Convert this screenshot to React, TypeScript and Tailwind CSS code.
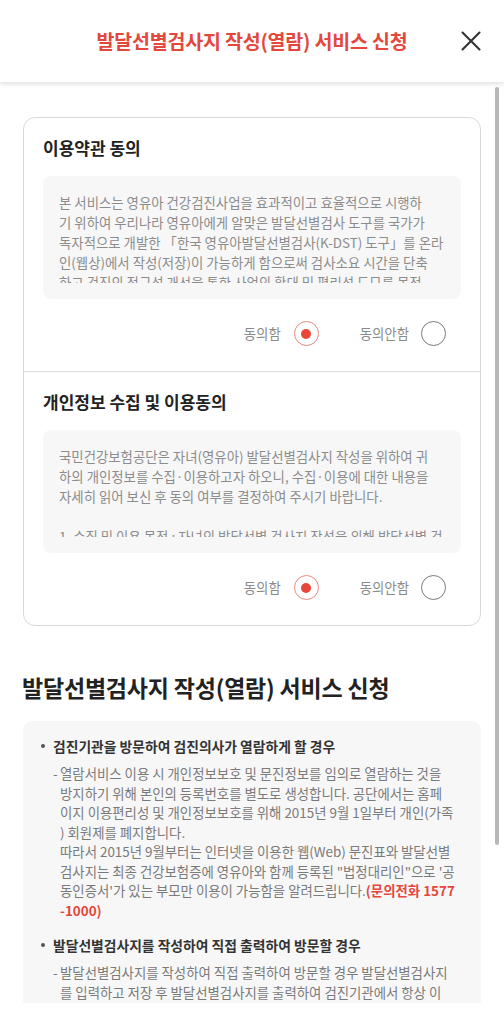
import type { ReactNode } from 'react'

const FONT = { fontFamily: '"Noto Sans CJK KR", "Noto Sans", sans-serif' }

const TERMS = [
  '본 서비스는 영유아 건강검진사업을 효과적이고 효율적으로 시행하',
  '기 위하여 우리나라 영유아에게 알맞은 발달선별검사 도구를 국가가',
  '독자적으로 개발한 「한국 영유아발달선별검사(K-DST) 도구」를 온라',
  '인(웹상)에서 작성(저장)이 가능하게 함으로써 검사소요 시간을 단축',
  '하고 검진의 접근성 개선을 통한 사업의 확대 및 편리성 도모를 목적',
]

const PRIVACY = [
  '국민건강보험공단은 자녀(영유아) 발달선별검사지 작성을 위하여 귀',
  '하의 개인정보를 수집·이용하고자 하오니, 수집·이용에 대한 내용을',
  '자세히 읽어 보신 후 동의 여부를 결정하여 주시기 바랍니다.',
  '\u00a0',
  '1. 수집 및 이용 목적 : 자녀의 발달선별 검사지 작성을 위해 발달선별 검사',
]

const Radio = ({ checked }: { checked: boolean }) =>
  checked ? (
    <span className="w-[25px] h-[25px] rounded-full border-[1.5px] border-[#e9897f] flex items-center justify-center">
      <span className="w-[10px] h-[10px] rounded-full bg-[#e8463a]" />
    </span>
  ) : (
    <span className="block w-[25px] h-[25px] rounded-full border-[1.5px] border-[#7a7a7a]" />
  )

const AgreeSection = ({ title, lines, last }: { title: string; lines: string[]; last?: boolean }) => (
  <div className={`px-[19px] pt-[17px] pb-[25px] ${last ? '' : 'border-b border-[#dcdcdc]'}`}>
    <h3 className="text-[17px] leading-[25px] font-bold text-[#222]">{title}</h3>
    <div className="mt-[16px] rounded-[8px] bg-[#f7f7f8] px-[16px] py-[16px]">
      <div className="h-[91px] overflow-hidden text-[13.4px] leading-[20px] text-[#8c8c8c]">
        {lines.map((l, i) => (
          <div key={i} className="whitespace-nowrap">{l}</div>
        ))}
      </div>
    </div>
    <div className="mt-[22px] flex items-center justify-end pr-[15px] text-[13.4px] text-[#8a8a8a]">
      <span>동의함</span>
      <span className="ml-[13px]"><Radio checked /></span>
      <span className="ml-[41px]">동의안함</span>
      <span className="ml-[12px]"><Radio checked={false} /></span>
    </div>
  </div>
)

const Bullet = ({ title, children }: { title: string; children: ReactNode }) => (
  <div>
    <div className="flex items-center text-[13.8px] leading-[22px] font-semibold text-[#333]">
      <span className="w-[4px] h-[4px] rounded-full bg-[#555] mr-[8px]" />
      {title}
    </div>
    <div className="flex pl-[12px] mt-[7px] text-[13.4px] leading-[19.5px] text-[#7a7a7a]">
      <span className="w-[7px] shrink-0">-</span>
      <div>{children}</div>
    </div>
  </div>
)

const Line = ({ children }: { children: ReactNode }) => <div className="whitespace-nowrap">{children}</div>

export default function App() {
  return (
    <div className="w-[504px] h-[1024px] bg-white overflow-hidden" style={FONT}>
      <header className="relative z-10 h-[82px] grid grid-cols-[1fr_auto_1fr] items-center bg-white shadow-[0_2px_5px_rgba(0,0,0,0.13)]">
        <div />
        <h1 className="text-[19.5px] font-bold text-[#e4473b] tracking-[-0.2px]">발달선별검사지 작성(열람) 서비스 신청</h1>
        <div className="flex justify-end pr-[22px]">
          <svg width="22" height="22" viewBox="0 0 22 22" fill="none" stroke="#333" strokeWidth="2.1" strokeLinecap="round">
            <path d="M2.5 2.5 L19.5 19.5 M19.5 2.5 L2.5 19.5" />
          </svg>
        </div>
      </header>

      <main className="relative h-[921px] overflow-hidden px-[23px] pt-[35px]">
        <div className="absolute right-[5px] top-[5px] w-[4px] h-[758px] rounded-full bg-[#b8b8b8]" />

        <section className="rounded-[12px] border border-[#d9d9d9]">
          <AgreeSection title="이용약관 동의" lines={TERMS} />
          <AgreeSection title="개인정보 수집 및 이용동의" lines={PRIVACY} last />
        </section>

        <h2 className="mt-[46px] text-[23px] leading-[30px] font-bold text-[#222] -ml-[1px] tracking-[-0.2px]">
          발달선별검사지 작성(열람) 서비스 신청
        </h2>

        <div className="mt-[19px] rounded-[10px] bg-[#f7f7f8] pl-[18px] pr-[12px] pt-[14px] pb-[40px]">
          <Bullet title="검진기관을 방문하여 검진의사가 열람하게 할 경우">
            <Line>열람서비스 이용 시 개인정보보호 및 문진정보를 임의로 열람하는 것을</Line>
            <Line>방지하기 위해 본인의 등록번호를 별도로 생성합니다. 공단에서는 홈페</Line>
            <Line>이지 이용편리성 및 개인정보보호를 위해 2015년 9월 1일부터 개인(가족</Line>
            <Line>) 회원제를 폐지합니다.</Line>
            <Line>따라서 2015년 9월부터는 인터넷을 이용한 웹(Web) 문진표와 발달선별</Line>
            <Line>검사지는 최종 건강보험증에 영유아와 함께 등록된 "법정대리인"으로 '공</Line>
            <Line>
              동인증서'가 있는 부모만 이용이 가능함을 알려드립니다.
              <span className="font-bold text-[#e4473b]">(문의전화 1577</span>
            </Line>
            <Line>
              <span className="font-bold text-[#e4473b]">-1000)</span>
            </Line>
          </Bullet>
          <div className="mt-[14px]">
            <Bullet title="발달선별검사지를 작성하여 직접 출력하여 방문할 경우">
              <Line>발달선별검사지를 작성하여 직접 출력하여 방문할 경우 발달선별검사지</Line>
              <Line>를 입력하고 저장 후 발달선별검사지를 출력하여 검진기관에서 항상 이</Line>
            </Bullet>
          </div>
        </div>
      </main>
    </div>
  )
}
